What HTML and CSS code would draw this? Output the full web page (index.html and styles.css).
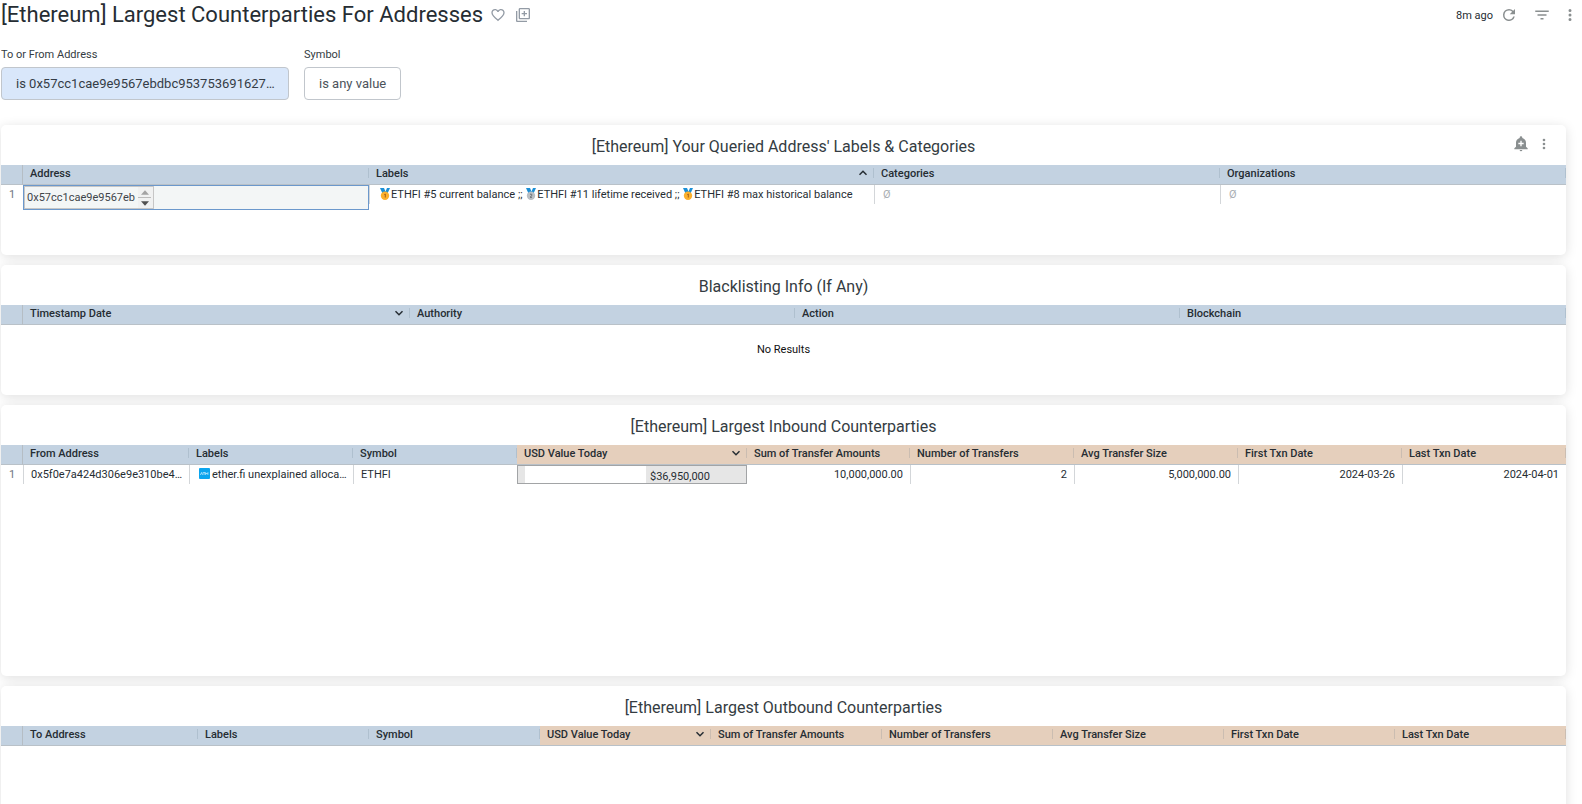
FILE: index.html
```html
<!DOCTYPE html>
<html lang="en">
<head>
<meta charset="utf-8">
<title>[Ethereum] Largest Counterparties For Addresses</title>
<link rel="stylesheet" href="styles.css">
</head>
<body>
<svg class="defs" aria-hidden="true">
  <symbol id="dots" viewBox="0 0 24 24"><path d="M12 8a2 2 0 1 0 0-4 2 2 0 0 0 0 4zm0 2a2 2 0 1 0 0 4 2 2 0 0 0 0-4zm0 6a2 2 0 1 0 0 4 2 2 0 0 0 0-4z"/></symbol>
  <symbol id="down" viewBox="0 0 10 10"><path d="M1.500 3.200 5 6.700l3.500-3.500" fill="none" stroke="currentColor" stroke-width="1.500"/></symbol>
  <symbol id="up" viewBox="0 0 10 10"><path d="M1.500 6.700 5 3.200l3.500 3.500" fill="none" stroke="currentColor" stroke-width="1.500"/></symbol>
  <symbol id="gold" viewBox="0 0 12 12"><path d="M1 0h4l1.500 3.500L8 0h3L8.500 5.500h-5z" fill="#1b8fd6"/><circle cx="6" cy="7.700" r="4.200" fill="#fbb02d"/><path d="M5.300 6.500 6.300 6v3.500" fill="none" stroke="#a5621a" stroke-width="1"/></symbol>
  <symbol id="silver" viewBox="0 0 12 12"><path d="M1 0h4l1.500 3.500L8 0h3L8.500 5.500h-5z" fill="#1b8fd6"/><circle cx="6" cy="7.700" r="4.200" fill="#b9bfc4"/><path d="M5 6.500q1-1 1.800 0T5 9.300h2" fill="none" stroke="#6b7176" stroke-width="1"/></symbol>
</svg>
<header class="topbar">
  <h1>[Ethereum] Largest Counterparties For Addresses</h1>
  <button class="icon-btn" aria-label="Favorite"><svg class="i16" viewBox="0 0 24 24"><path d="M16.500 3c-1.740 0-3.410.810-4.500 2.090C10.910 3.810 9.240 3 7.500 3 4.420 3 2 5.420 2 8.500c0 3.780 3.400 6.860 8.550 11.540L12 21.350l1.450-1.320C18.600 15.360 22 12.280 22 8.500 22 5.420 19.580 3 16.500 3zm-4.400 15.550-.1.100-.1-.1C7.140 14.240 4 11.390 4 8.500 4 6.500 5.500 5 7.500 5c1.540 0 3.040.990 3.570 2.360h1.870C13.460 5.990 14.960 5 16.500 5c2 0 3.500 1.500 3.500 3.500 0 2.890-3.140 5.740-7.900 10.050z"/></svg></button>
  <button class="icon-btn" aria-label="Copy dashboard"><svg class="i16" viewBox="0 0 24 24"><path d="M3.500 6h-2v14.500c0 1.100.9 2 2 2H18v-2H3.500zM20.500 1.500h-13c-1.100 0-2 .9-2 2v13c0 1.100.9 2 2 2h13c1.100 0 2-.9 2-2v-13c0-1.100-.9-2-2-2zm0 15h-13v-13h13zM13 14h2v-3h3V9h-3V6h-2v3h-3v2h3z"/></svg></button>
  <div class="actions">
    <span class="ago">8m ago</span>
    <button class="icon-btn" aria-label="Refresh"><svg class="i18" viewBox="0 0 24 24"><path d="M17.650 6.350A7.960 7.960 0 0 0 12 4a8 8 0 1 0 7.730 10h-2.080A6 6 0 1 1 12 6c1.660 0 3.140.690 4.220 1.780L13 11h7V4z"/></svg></button>
    <button class="icon-btn" aria-label="Filters"><svg class="i18" viewBox="0 0 24 24"><path d="M10 18h4v-2h-4zM3 6v2h18V6zm3 7h12v-2H6z"/></svg></button>
    <button class="icon-btn" aria-label="More"><svg class="i18"><use href="#dots"/></svg></button>
  </div>
</header>
<section class="filters">
  <div class="filter"><label for="f-addr">To or From Address</label><button id="f-addr" class="chip chip-on">is 0x57cc1cae9e9567ebdbc953753691627…</button></div>
  <div class="filter"><label for="f-sym">Symbol</label><button id="f-sym" class="chip">is any value</button></div>
</section>
<main>
  <section class="card card-s">
    <div class="card-head">
      <h2>[Ethereum] Your Queried Address' Labels &amp; Categories</h2>
      <div class="card-tools">
        <button class="icon-btn" aria-label="Add alert"><svg class="i16" viewBox="0 0 24 24"><path d="M10 21h4a2 2 0 0 1-4 0zM22 18.500V20H2v-1.500L4.500 16v-6c0-3.300 2.200-6 5.500-6.900V2.500a2 2 0 0 1 4 0v.6c3.300.9 5.500 3.600 5.500 6.900v6zM16 10.200h-3v-3h-2v3H8v2h3v3h2v-3h3z"/></svg></button>
        <button class="icon-btn" aria-label="Tile actions"><svg class="i16"><use href="#dots"/></svg></button>
      </div>
    </div>
    <table>
      <colgroup><col style="width:22px"><col style="width:346px"><col style="width:505px"><col style="width:346px"><col style="width:346px"></colgroup>
      <thead><tr><th class="num"></th><th><div>Address</div></th><th><div>Labels<svg class="sort"><use href="#up"/></svg></div></th><th><div>Categories</div></th><th><div>Organizations</div></th></tr></thead>
      <tbody><tr>
        <td class="num"><div>1</div></td>
        <td class="boxed"><div class="picked"><div class="stepper"><input type="text" value="0x57cc1cae9e9567eb" aria-label="Address" readonly><span class="arrows"><button class="arrow" aria-label="Up"><svg viewBox="0 0 9 5"><path d="M0 5 4.500 0 9 5z" fill="#a3a3a3"/></svg></button><button class="arrow" aria-label="Down"><svg viewBox="0 0 9 5"><path d="M0 0h9L4.500 5z" fill="#505050"/></svg></button></span></div></div></td>
        <td><div class="labels"><svg class="medal"><use href="#gold"/></svg>ETHFI #5 current balance ;; <svg class="medal"><use href="#silver"/></svg>ETHFI #11 lifetime received ;; <svg class="medal"><use href="#gold"/></svg>ETHFI #8 max historical balance</div></td>
        <td><div class="null">Ø</div></td><td><div class="null">Ø</div></td>
      </tr></tbody>
    </table>
  </section>

  <section class="card card-s">
    <div class="card-head"><h2>Blacklisting Info (If Any)</h2></div>
    <table>
      <colgroup><col style="width:22px"><col style="width:387px"><col style="width:385px"><col style="width:385px"><col style="width:386px"></colgroup>
      <thead><tr><th class="num"></th><th><div>Timestamp Date<svg class="sort"><use href="#down"/></svg></div></th><th><div>Authority</div></th><th><div>Action</div></th><th><div>Blockchain</div></th></tr></thead>
    </table>
    <p class="empty">No Results</p>
  </section>

  <section class="card card-l">
    <div class="card-head"><h2>[Ethereum] Largest Inbound Counterparties</h2></div>
    <table>
      <colgroup><col style="width:22px"><col style="width:166px"><col style="width:164px"><col style="width:164px"><col style="width:230px"><col style="width:163px"><col style="width:164px"><col style="width:164px"><col style="width:164px"><col style="width:164px"></colgroup>
      <thead><tr><th class="num"></th><th><div>From Address</div></th><th><div>Labels</div></th><th><div>Symbol</div></th><th class="m"><div>USD Value Today<svg class="sort"><use href="#down"/></svg></div></th><th class="m"><div>Sum of Transfer Amounts</div></th><th class="m"><div>Number of Transfers</div></th><th class="m"><div>Avg Transfer Size</div></th><th class="m"><div>First Txn Date</div></th><th class="m"><div>Last Txn Date</div></th></tr></thead>
      <tbody><tr>
        <td class="num"><div>1</div></td>
        <td><div>0x5f0e7a424d306e9e310be4…</div></td>
        <td><div class="labels"><svg class="atm" viewBox="0 0 12 12"><rect width="12" height="12" rx="1" fill="#0ba5ee"/><path d="M1.500 7.500 3 4.800l.8 2.700M4.500 5h2M5.500 5v2.500M7.200 7.500V5l1.200 1.500L9.700 5v2.500" fill="none" stroke="#d9f2ff" stroke-width=".8"/></svg>ether.fi unexplained alloca…</div></td>
        <td><div>ETHFI</div></td>
        <td class="boxed"><div class="bar"><span class="bar-fill"></span><span class="bar-value">$36,950,000</span></div></td>
        <td class="r first"><div>10,000,000.00</div></td>
        <td class="r"><div>2</div></td><td class="r"><div>5,000,000.00</div></td><td class="r"><div>2024-03-26</div></td><td class="r"><div>2024-04-01</div></td>
      </tr></tbody>
    </table>
  </section>

  <section class="card card-l">
    <div class="card-head"><h2>[Ethereum] Largest Outbound Counterparties</h2></div>
    <table>
      <colgroup><col style="width:22px"><col style="width:175px"><col style="width:171px"><col style="width:171px"><col style="width:171px"><col style="width:171px"><col style="width:171px"><col style="width:171px"><col style="width:171px"><col style="width:171px"></colgroup>
      <thead><tr><th class="num"></th><th><div>To Address</div></th><th><div>Labels</div></th><th><div>Symbol</div></th><th class="m"><div>USD Value Today<svg class="sort"><use href="#down"/></svg></div></th><th class="m"><div>Sum of Transfer Amounts</div></th><th class="m"><div>Number of Transfers</div></th><th class="m"><div>Avg Transfer Size</div></th><th class="m"><div>First Txn Date</div></th><th class="m"><div>Last Txn Date</div></th></tr></thead>
    </table>
  </section>
</main>
</body>
</html>
```
FILE: styles.css
```css
* { box-sizing: border-box; }
body {
  display: flex;
  flex-direction: column;
  height: 100vh;
  margin: 0;
  background: #fff;
  color: #262d33;
  font-family: Roboto, "Liberation Sans", sans-serif;
  font-size: 11px;
}
.defs { position: absolute; width: 0; height: 0; }
h1, h2, p { margin: 0; font-weight: 400; }
button { font: inherit; color: inherit; cursor: pointer; }
.icon-btn {
  display: flex;
  padding: 0;
  border: 0;
  background: none;
  color: #939ba5;
}
.icon-btn svg { fill: currentColor; }
.i16 { width: 16px; height: 16px; }
.i18 { width: 18px; height: 18px; }

.topbar {
  display: flex;
  flex: none;
  align-items: center;
  gap: 9px;
  height: 30px;
  padding: 0 3px 0 1px;
}
h1 { font-size: 22px; line-height: 28px; }
h1 + .icon-btn { margin-left: -2px; }
.actions { display: flex; align-items: center; gap: 15px; margin-left: auto; }
.actions .icon-btn { color: #8a8f90; }
.actions .icon-btn:last-child { margin-left: -5px; }
.ago { margin-right: -8px; }

.filters { display: flex; flex: none; gap: 15px; padding: 18px 1px 5px; }
.filter { display: flex; flex-direction: column; gap: 5px; }
.filter label { font-size: 11px; line-height: 14px; color: #343c42; }
.chip {
  height: 33px;
  padding: 0 14px;
  border: 1px solid #c1c6cc;
  border-radius: 4px;
  background: #fff;
  font-size: 13px;
  white-space: nowrap;
  color: #4c535b;
}
.chip-on { width: 288px; background: #d9e7fa; color: #343c46; text-align: left; }

main {
  display: flex;
  flex: 1;
  flex-direction: column;
  gap: 10px;
  min-height: 0;
  padding: 20px 16px 0 1px;
  overflow: hidden;
}
.card {
  flex: none;
  border-radius: 5px;
  background: #fff;
  box-shadow: 0 2px 12px rgba(0, 0, 0, .13);
}
.card-s { min-height: 130px; }
.card-l { min-height: 271px; }
.card-head { position: relative; height: 40px; }
h2 {
  font-size: 16px;
  line-height: 43px;
  text-align: center;
  color: #343c42;
}
.card-tools {
  position: absolute;
  top: 11px;
  right: 14px;
  display: flex;
  gap: 7px;
}
.card-tools .icon-btn { color: #8a8f90; }

table { width: 100%; table-layout: fixed; border-collapse: separate; border-spacing: 0; }
th, td { padding: 0; vertical-align: top; white-space: nowrap; }
th {
  height: 20px;
  padding-top: 3px;
  border-bottom: 1px solid #b9c1c8;
  background: #c3d2e1;
  font-weight: 500;
  text-align: left;
}
th.m { background: #e5cfbc; }
th.num { border-right: 1px solid #b5bdc4; }
th div {
  display: flex;
  align-items: center;
  justify-content: space-between;
  height: 10px;
  padding: 0 5px 0 7px;
  border-right: 1px solid rgba(90, 110, 130, .18);
}
.sort { width: 10px; height: 10px; }
td > div {
  height: 19px;
  padding: 0 7px;
  border-left: 1px solid #d3d6d9;
  line-height: 20px;
  overflow: hidden;
}
td.num > div { padding: 0 8px; border-left: 0; color: #707781; }
td.r > div { text-align: right; }
td.first > div { border-left: 0; }
td > .null { padding-left: 8px; color: #a9aeb3; }
td > .labels { padding: 0 0 0 9px; }
.medal { width: 12px; height: 12px; vertical-align: -2px; }
.atm { width: 11px; height: 11px; margin-right: 2px; vertical-align: -1px; }
td > .picked { display: flex; height: 25px; padding: 0; border: 1px solid #6b98cc; background: #f3f6f6; }
.stepper { display: flex; width: 130px; border: 1px solid #c6c6c6; }
.stepper input {
  flex: 1;
  min-width: 0;
  padding: 0 0 0 2px;
  border: 0;
  background: none;
  color: #40454a;
  font: inherit;
}
.arrows { display: flex; flex-direction: column; width: 15px; padding-right: 2px; background: #f0f1f1; }
.arrow {
  display: flex;
  flex: 1;
  align-items: center;
  justify-content: center;
  padding: 0;
  border: 0;
  background: none;
}
.arrow:first-child { border-bottom: 1px solid #bbb; }
.arrow svg { width: 8px; height: 5px; }
td > .bar { display: flex; border: 1px solid #a2a4a6; background: #e6e6e6; }
.bar-fill { width: 121px; background: #fff; }
.bar-value { padding-left: 4px; line-height: 21px; }
.empty { padding-top: 17px; line-height: 16px; text-align: center; color: #111; }
```
